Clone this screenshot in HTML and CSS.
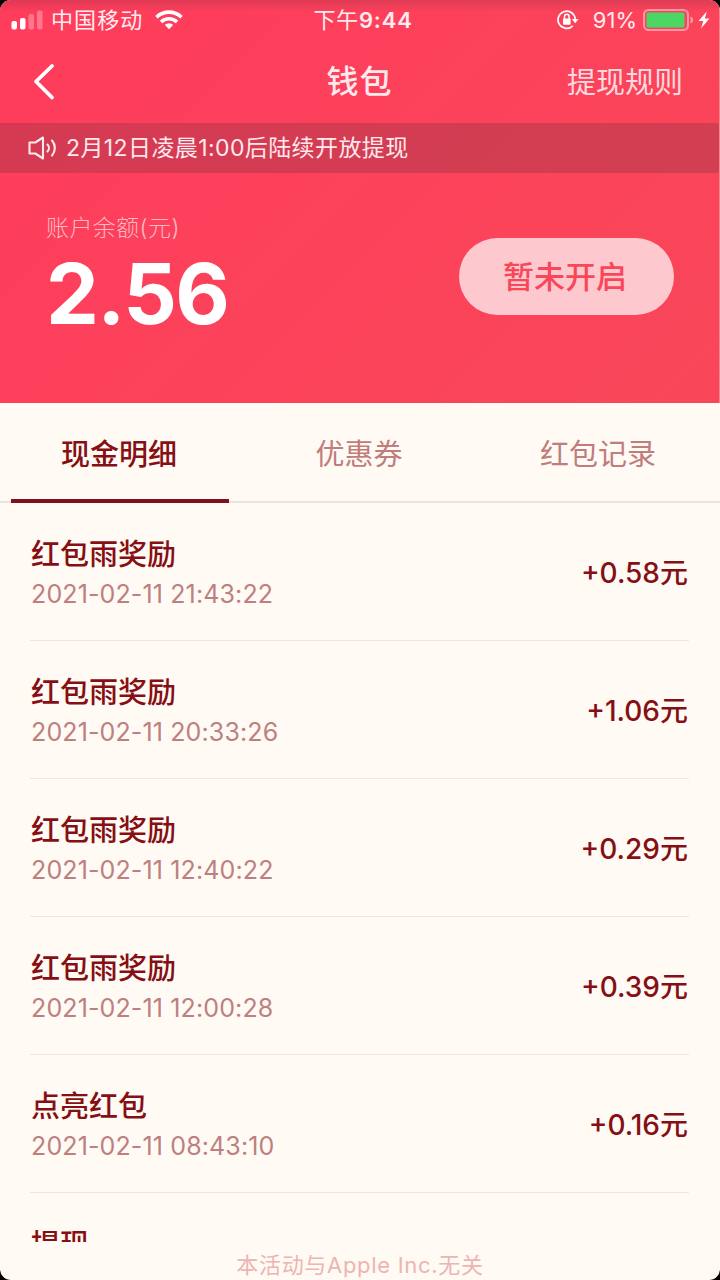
FILE: index.html
```html
<!DOCTYPE html>
<html lang="zh-CN">
    <head>
        <meta charset="utf-8">
        <meta name="viewport" content="width=device-width, initial-scale=1.0">
        <title>钱包</title>

        <link rel="stylesheet" href="styles.css">
    </head>
    <body>
        <main class="screen">
            <header class="header">
                <div class="status">
                    <div class="status-left">
                        <svg class="signal" width="32" height="20" viewBox="0 0 32 20">
                            <rect x="0.5" y="11" width="5.5" height="8.5" rx="2" fill="#fff"/>
                            <rect x="9" y="8" width="5.5" height="11.5" rx="2" fill="#fff"/>
                            <rect x="17.5" y="4" width="5.5" height="15.5" rx="2" fill="#fff" opacity="0.3"/>
                            <rect x="26" y="0.5" width="5.5" height="19" rx="2" fill="#fff" opacity="0.3"/>
                        </svg>
                        <span class="carrier">中国移动</span>
                        <svg class="wifi" width="28" height="20" viewBox="0 0 28 20" fill="none" stroke="#fff" stroke-width="3.6">
                            <path d="M1.5 7.2a18 18 0 0 1 25 0"/>
                            <path d="M6 12a11.6 11.6 0 0 1 16 0"/>
                            <path d="M14 19.2l-4.2-4.4a6.2 6.2 0 0 1 8.4 0z" fill="#fff" stroke="none"/>
                        </svg>
                    </div>
                    <span class="time">下午<b>9:44</b></span>
                    <div class="status-right">
                        <svg class="lock" width="22" height="20" viewBox="0 0 22 20" fill="none" stroke="#fff" stroke-width="1.7">
                            <path d="M15.8 15.8a8.6 8.6 0 1 1 2.4-7"/>
                            <path d="M14.8 9h6.8l-3.4 4.2z" fill="#fff" stroke="none"/>
                            <rect x="6" y="8.5" width="7.6" height="6.2" rx="0.8" fill="#fff" stroke="none"/>
                            <path d="M7.5 9V6.6a2.3 2.3 0 0 1 4.6 0V9" stroke-width="1.5"/>
                        </svg>
                        <span class="percent">91%</span>
                        <svg class="battery" width="52" height="22" viewBox="0 0 52 22">
                            <rect x="1" y="1" width="44" height="20" rx="4.5" fill="none" stroke="#fff" stroke-opacity="0.45" stroke-width="2"/>
                            <rect x="3.5" y="3.5" width="38" height="15" rx="1.5" fill="#4bd763"/>
                            <path d="M47.5 7.5c3.5 1 3.5 6 0 7z" fill="#fff" opacity="0.45"/>
                        </svg>
                        <svg class="bolt" width="12" height="18" viewBox="0 0 12 18">
                            <path d="M8.8 0.5L0.5 10h4.8L3 17.5 11.5 7.5H6.8z" fill="#fff"/>
                        </svg>
                    </div>
                </div>

                <nav class="nav">
                    <svg class="back" width="24" height="38" viewBox="0 0 24 38" fill="none" stroke="#fff" stroke-width="3.8" stroke-linecap="round" stroke-linejoin="round">
                        <path d="M20 3L4 18.5 20 34.5"/>
                    </svg>
                    <h1 class="nav-title">钱包</h1>
                    <span class="nav-rule">提现规则</span>
                </nav>

                <div class="notice">
                    <svg class="speaker" width="30" height="24" viewBox="0 0 30 24" fill="none" stroke="#ffe9ec" stroke-width="2.1" stroke-linecap="round" stroke-linejoin="round">
                        <path d="M1.5 6.5h5.8L15 1.5v21l-7.7-5H1.5z"/>
                        <path d="M19.5 8.5a5 5 0 0 1 0 7"/>
                        <path d="M24 4.5a11.3 11.3 0 0 1 0 15"/>
                    </svg>
                    <span class="notice-text">2月12日凌晨1:00后陆续开放提现</span>
                </div>

                <section class="balance">
                    <div>
                        <p class="balance-label">账户余额(元)</p>
                        <p class="balance-value">2.56</p>
                    </div>
                    <button type="button" class="withdraw">暂未开启</button>
                </section>
            </header>

            <div class="tabs">
                <div class="tab active">现金明细</div>
                <div class="tab">优惠券</div>
                <div class="tab">红包记录</div>
            </div>

            <ul class="list">
                <li class="item">
                    <div>
                        <p class="item-title">红包雨奖励</p>
                        <p class="item-date">2021-02-11 21:43:22</p>
                    </div>
                    <span class="amount">+0.58元</span>
                </li>
                <li class="item">
                    <div>
                        <p class="item-title">红包雨奖励</p>
                        <p class="item-date">2021-02-11 20:33:26</p>
                    </div>
                    <span class="amount">+1.06元</span>
                </li>
                <li class="item">
                    <div>
                        <p class="item-title">红包雨奖励</p>
                        <p class="item-date">2021-02-11 12:40:22</p>
                    </div>
                    <span class="amount">+0.29元</span>
                </li>
                <li class="item">
                    <div>
                        <p class="item-title">红包雨奖励</p>
                        <p class="item-date">2021-02-11 12:00:28</p>
                    </div>
                    <span class="amount">+0.39元</span>
                </li>
                <li class="item">
                    <div>
                        <p class="item-title">点亮红包</p>
                        <p class="item-date">2021-02-11 08:43:10</p>
                    </div>
                    <span class="amount">+0.16元</span>
                </li>
                <li class="item">
                    <div>
                        <p class="item-title">提现</p>
                    </div>
                </li>
            </ul>

            <footer class="footer">本活动与Apple Inc.无关</footer>
        </main>
    </body>
</html>
```

FILE: styles.css
```css
* {
    box-sizing: border-box;
    margin: 0;
    padding: 0;
}
body {
    background: #000;
    font-family: Inter, "Noto Sans CJK SC", sans-serif;
}
.screen {
    display: flex;
    flex-direction: column;
    width: 720px;
    height: 1280px;
    overflow: hidden;
    border-radius: 11px;
    background: #fffaf3;
}

/* header */
.header {
    height: 403px;
    flex: none;
    border-right: 1px solid #fb8591;
    background: linear-gradient(180deg, rgba(150, 50, 70, 0.3), rgba(150, 50, 70, 0) 12px), linear-gradient(135deg, #ff3c5c, #f94759);
    color: #fff;
}
.status {
    display: grid;
    grid-template-columns: 1fr auto 1fr;
    align-items: center;
    height: 40px;
    padding: 0 9px 0 11px;
    font-size: 22px;
    line-height: 40px;
    color: #ffecef;
}
.status-left, .status-right {
    display: flex;
    align-items: center;
}
.status-right {
    justify-content: flex-end;
}
.carrier {
    margin-left: 8px;
    letter-spacing: 1.1px;
}
.wifi {
    margin-left: 12px;
}
.time {
    padding-left: 5px;
    letter-spacing: 0.8px;
}
.time b {
    font-weight: 600;
}
.percent {
    margin: 0 6px 0 14px;
}
.bolt {
    margin-left: 3px;
}
.nav {
    display: grid;
    grid-template-columns: 1fr auto 1fr;
    align-items: center;
    height: 83px;
    padding: 0 36px 0 32px;
}
.nav-title {
    padding: 0 0 5px 4px;
    font-size: 32px;
    font-weight: 500;
    letter-spacing: 1px;
    color: #ffe9ec;
}
.nav-rule {
    justify-self: end;
    padding-bottom: 4px;
    font-size: 29px;
    color: #ffd8de;
}
.notice {
    display: flex;
    align-items: center;
    gap: 8px;
    height: 50px;
    padding-left: 28px;
    background: rgba(70, 45, 55, 0.22);
    font-size: 23px;
    color: #ffe9ec;
}
.notice-text {
    padding-bottom: 4px;
    letter-spacing: 0.4px;
}
.balance {
    display: flex;
    justify-content: space-between;
    padding: 38px 45px 0 46px;
}
.balance-label {
    font-size: 23px;
    font-weight: 300;
    line-height: 34px;
    letter-spacing: 0.4px;
    color: #ffbac4;
}
.balance-value {
    font-size: 84px;
    font-weight: 700;
    line-height: 98px;
    letter-spacing: -1.6px;
}
.withdraw {
    width: 215px;
    height: 77px;
    margin-top: 27px;
    padding: 0 3px 4px 0;
    border: none;
    border-radius: 39px;
    background: #fdc8ce;
    color: #f94759;
    font-family: inherit;
    font-size: 31px;
    font-weight: 500;
}

/* tabs */
.tabs {
    display: flex;
    flex: none;
    height: 100px;
    border-bottom: 2px solid #ece3de;
}
.tab {
    display: flex;
    align-items: center;
    justify-content: center;
    width: 218px;
    height: 100px;
    margin: 0 10px 0 11px;
    padding-bottom: 2px;
    font-size: 29px;
    color: #c17c7c;
}
.tab.active {
    padding: 1px 2px 0 0;
    border-bottom: 4px solid #7d121c;
    font-weight: 500;
    color: #850f14;
}

/* records */
.list {
    height: 739px;
    flex: none;
    overflow: hidden;
    list-style: none;
}
.item {
    display: flex;
    justify-content: space-between;
    height: 138px;
    margin: 0 31px 0 30px;
    padding: 31px 1px 0;
    border-bottom: 1px solid #efe6e0;
}
.item-title {
    font-size: 29px;
    font-weight: 500;
    line-height: 42px;
    color: #850f14;
}
.item-date {
    font-size: 25px;
    line-height: 37px;
    letter-spacing: 0.13px;
    color: #bd8080;
}
.amount {
    margin-top: 18px;
    font-size: 28px;
    font-weight: 500;
    line-height: 42px;
    color: #850f14;
}
.footer {
    margin-top: 3px;
    text-align: center;
    font-size: 22px;
    line-height: 40px;
    letter-spacing: 0.7px;
    color: #eeb4b1;
}
```
